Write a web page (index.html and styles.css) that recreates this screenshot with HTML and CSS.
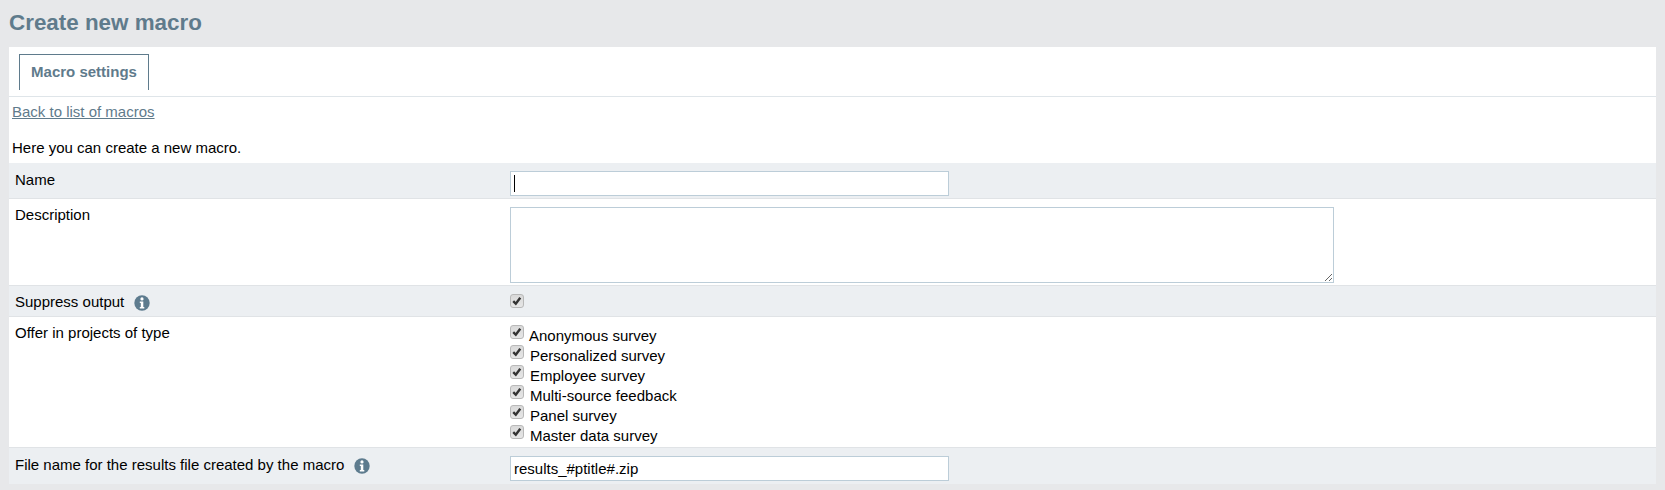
FILE: index.html
```html
<!DOCTYPE html>
<html lang="en">
<head>
<meta charset="utf-8">
<title>Create new macro</title>
<link rel="stylesheet" href="styles.css">
</head>
<body>
<h1 class="page-title">Create new macro</h1>
<main class="panel">
  <div class="tabs"><a class="tab">Macro settings</a></div>
  <div class="intro">
    <a class="back" href="#">Back to list of macros</a>
    <p class="lead">Here you can create a new macro.</p>
  </div>
  <div class="row row-shaded row-name">
    <div class="label">Name</div>
    <div class="control"><span class="input-wrap"><input class="text" type="text"><i class="caret"></i></span></div>
  </div>
  <div class="row row-desc">
    <div class="label">Description</div>
    <div class="control"><textarea class="area"></textarea></div>
  </div>
  <div class="row row-shaded row-suppress">
    <div class="label">Suppress output <svg class="info" viewBox="0 0 16 16"><circle cx="8" cy="8" r="7.7" fill="#5d7b8e"/><circle cx="8" cy="3.9" r="1.6" fill="#fff"/><path d="M5.8 6.5h3.5v5.4h1v1.5H5.8v-1.5h1V8H5.8z" fill="#fff"/></svg></div>
    <div class="control"><input class="check" type="checkbox" checked disabled></div>
  </div>
  <div class="row row-types">
    <div class="label">Offer in projects of type</div>
    <div class="control checks">
      <label class="opt opt-first"><input class="check" type="checkbox" checked disabled>Anonymous survey</label>
      <label class="opt"><input class="check" type="checkbox" checked disabled>Personalized survey</label>
      <label class="opt"><input class="check" type="checkbox" checked disabled>Employee survey</label>
      <label class="opt"><input class="check" type="checkbox" checked disabled>Multi-source feedback</label>
      <label class="opt"><input class="check" type="checkbox" checked disabled>Panel survey</label>
      <label class="opt"><input class="check" type="checkbox" checked disabled>Master data survey</label>
    </div>
  </div>
  <div class="row row-shaded row-file">
    <div class="label label-low">File name for the results file created by the macro <svg class="info" viewBox="0 0 16 16"><circle cx="8" cy="8" r="7.7" fill="#5d7b8e"/><circle cx="8" cy="3.9" r="1.6" fill="#fff"/><path d="M5.8 6.5h3.5v5.4h1v1.5H5.8v-1.5h1V8H5.8z" fill="#fff"/></svg></div>
    <div class="control"><input class="text" type="text" value="results_#ptitle#.zip"></div>
  </div>
</main>
</body>
</html>
```
FILE: styles.css
```css
* { box-sizing: border-box; }
html, body { margin: 0; height: 100%; }
body {
  background: #e7e8ea;
  color: #000;
  font: 15px "Liberation Sans", Arial, sans-serif;
  overflow: hidden;
}
.page-title {
  margin: 0;
  height: 47px;
  padding: 9px 0 0 9px;
  font-size: 22.4px;
  line-height: 28px;
  font-weight: 700;
  color: #5f7b8c;
}
.panel {
  margin: 0 9px;
  background: #fff;
  height: 436px;
}
.tabs {
  height: 50px;
  padding: 7px 0 0 10px;
  border-bottom: 1px solid #dfe5e9;
}
.tab {
  display: block;
  width: 130px;
  height: 36px;
  border: 1px solid #5f7b8c;
  border-bottom: 0;
  text-align: center;
  font-weight: 700;
  line-height: 34px;
  color: #5f7b8c;
}
.intro { height: 66px; padding: 6px 0 0 3px; }
.back { display: block; color: #5f7b8c; line-height: 18px; }
.lead { margin: 18px 0 0; line-height: 18px; }
.row {
  display: grid;
  grid-template-columns: 501px 1fr;
  border-bottom: 1px solid #e0e3e6;
}
.row-shaded { background: #eceff2; }
.row-name { height: 36px; }
.row-name .label { padding-top: 8px; }
.row-desc { height: 87px; }
.row-suppress { height: 31px; }
.row-types { height: 131px; }
.row-file { height: 36px; border-bottom: 0; }
.label { padding: 7px 0 0 6px; line-height: 18px; }
.label-low { padding-top: 8px; }
.control { padding-top: 8px; }
.text {
  display: block;
  width: 439px;
  height: 25px;
  padding: 0 3px;
  border: 1px solid #bccdd8;
  background: #fff;
  font: inherit;
  color: #000;
  outline: 0;
}
.input-wrap { display: block; position: relative; width: 439px; }
.caret {
  position: absolute;
  left: 4px;
  top: 4px;
  width: 1px;
  height: 17px;
  background: #000;
}
.area {
  display: block;
  width: 824px;
  height: 76px;
  border: 1px solid #bccdd8;
  background: #fff;
  outline: 0;
  resize: both;
}
.check {
  appearance: none;
  display: block;
  flex: none;
  width: 14px;
  height: 14px;
  margin: 0;
  border: 1px solid #b8b8b8;
  border-radius: 3px;
  background: url("data:image/svg+xml,%3Csvg xmlns='http://www.w3.org/2000/svg' viewBox='0 0 14 14'%3E%3Cpath d='M2.6 7.2l3 3 5.2-7' fill='none' stroke='%23333' stroke-width='2.8'/%3E%3C/svg%3E") center/12px no-repeat, linear-gradient(#d9d9d9, #e6e6e6);
}
.checks { padding-top: 9px; }
.opt { display: flex; height: 20px; line-height: 20px; gap: 6px; }
.opt-first { gap: 5px; }
.opt .check { margin-top: -1px; }
.info {
  width: 16px;
  height: 16px;
  margin-left: 6px;
  vertical-align: -4px;
}
```
